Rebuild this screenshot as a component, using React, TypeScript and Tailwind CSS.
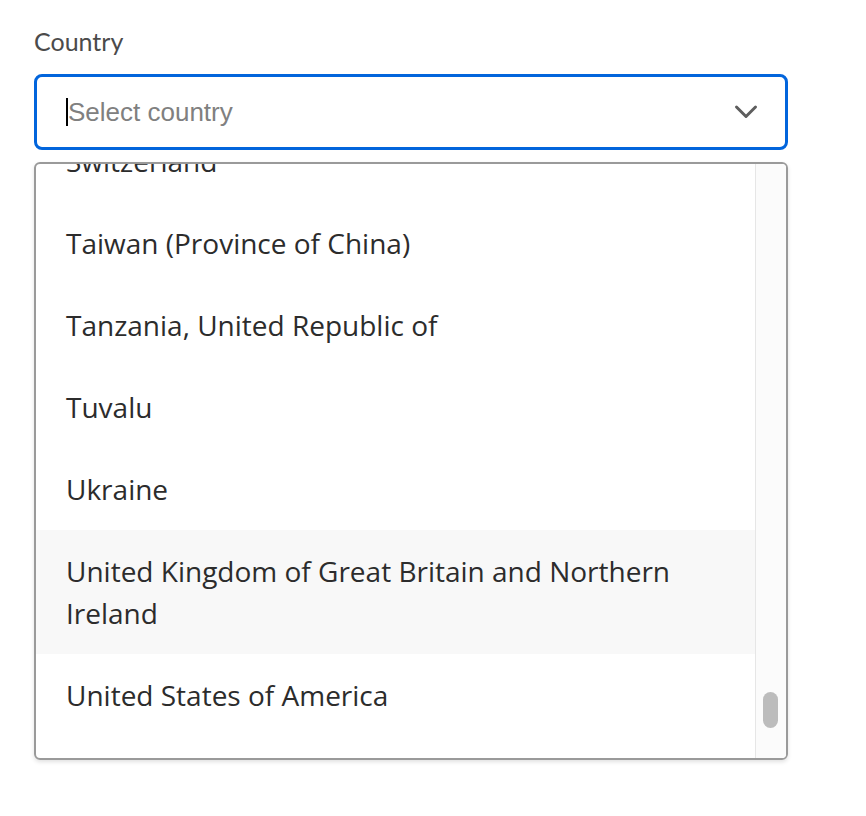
const countries = [
  "Switzerland",
  "Taiwan (Province of China)",
  "Tanzania, United Republic of",
  "Tuvalu",
  "Ukraine",
  "United Kingdom of Great Britain and Northern Ireland",
  "United States of America",
];

const HIGHLIGHT = "United Kingdom of Great Britain and Northern Ireland";

export default function App() {
  return (
    <div className="min-h-[816px] w-[866px] bg-white pl-[34px] pt-[26px] font-['Open_Sans',sans-serif]">
      <div className="w-[754px]">
        <label className="block font-['Lato',sans-serif] text-[25px] leading-[30px] text-[#4b4b4b]">Country</label>

        {/* trigger */}
        <div className="mt-[18px] flex h-[76px] items-center rounded-[8px] border-[3px] border-[#0265dc] pl-[29px] pr-[27px]">
          <span className="h-[28px] w-[2px] bg-black" />
          <span className="flex-1 font-['Liberation_Sans',sans-serif] text-[26px] text-[#808080]">
            Select country
          </span>
          <svg width="24" height="16" viewBox="0 0 24 16" fill="none" className="text-[#5e5e5e]">
            <path d="M2.5 3 L12 12.5 L21.5 3" stroke="currentColor" strokeWidth="3" strokeLinecap="round" strokeLinejoin="round" />
          </svg>
        </div>

        {/* listbox */}
        <div className="mt-[12px] flex h-[598px] overflow-hidden rounded-[6px] border-2 border-[#9a9a9a] shadow-[0_2px_4px_rgba(0,0,0,0.12)]">
          <ul className="-mt-[44px] flex-1">
            {countries.map((c) => (
              <li
                key={c}
                className={
                  "py-[20px] pl-[30px] pr-[40px] text-[28px] leading-[42px] text-[#2c2c2c] " +
                  (c === HIGHLIGHT ? "bg-[#f8f8f8]" : "")
                }
              >
                {c}
              </li>
            ))}
          </ul>
          <div className="flex w-[31px] flex-col justify-end border-l border-[#e6e6e6] bg-[#fbfbfb] pb-[30px] pl-[7px]">
            <div className="h-[36px] w-[15px] rounded-full bg-[#bcbcbc]" />
          </div>
        </div>
      </div>
    </div>
  );
}
